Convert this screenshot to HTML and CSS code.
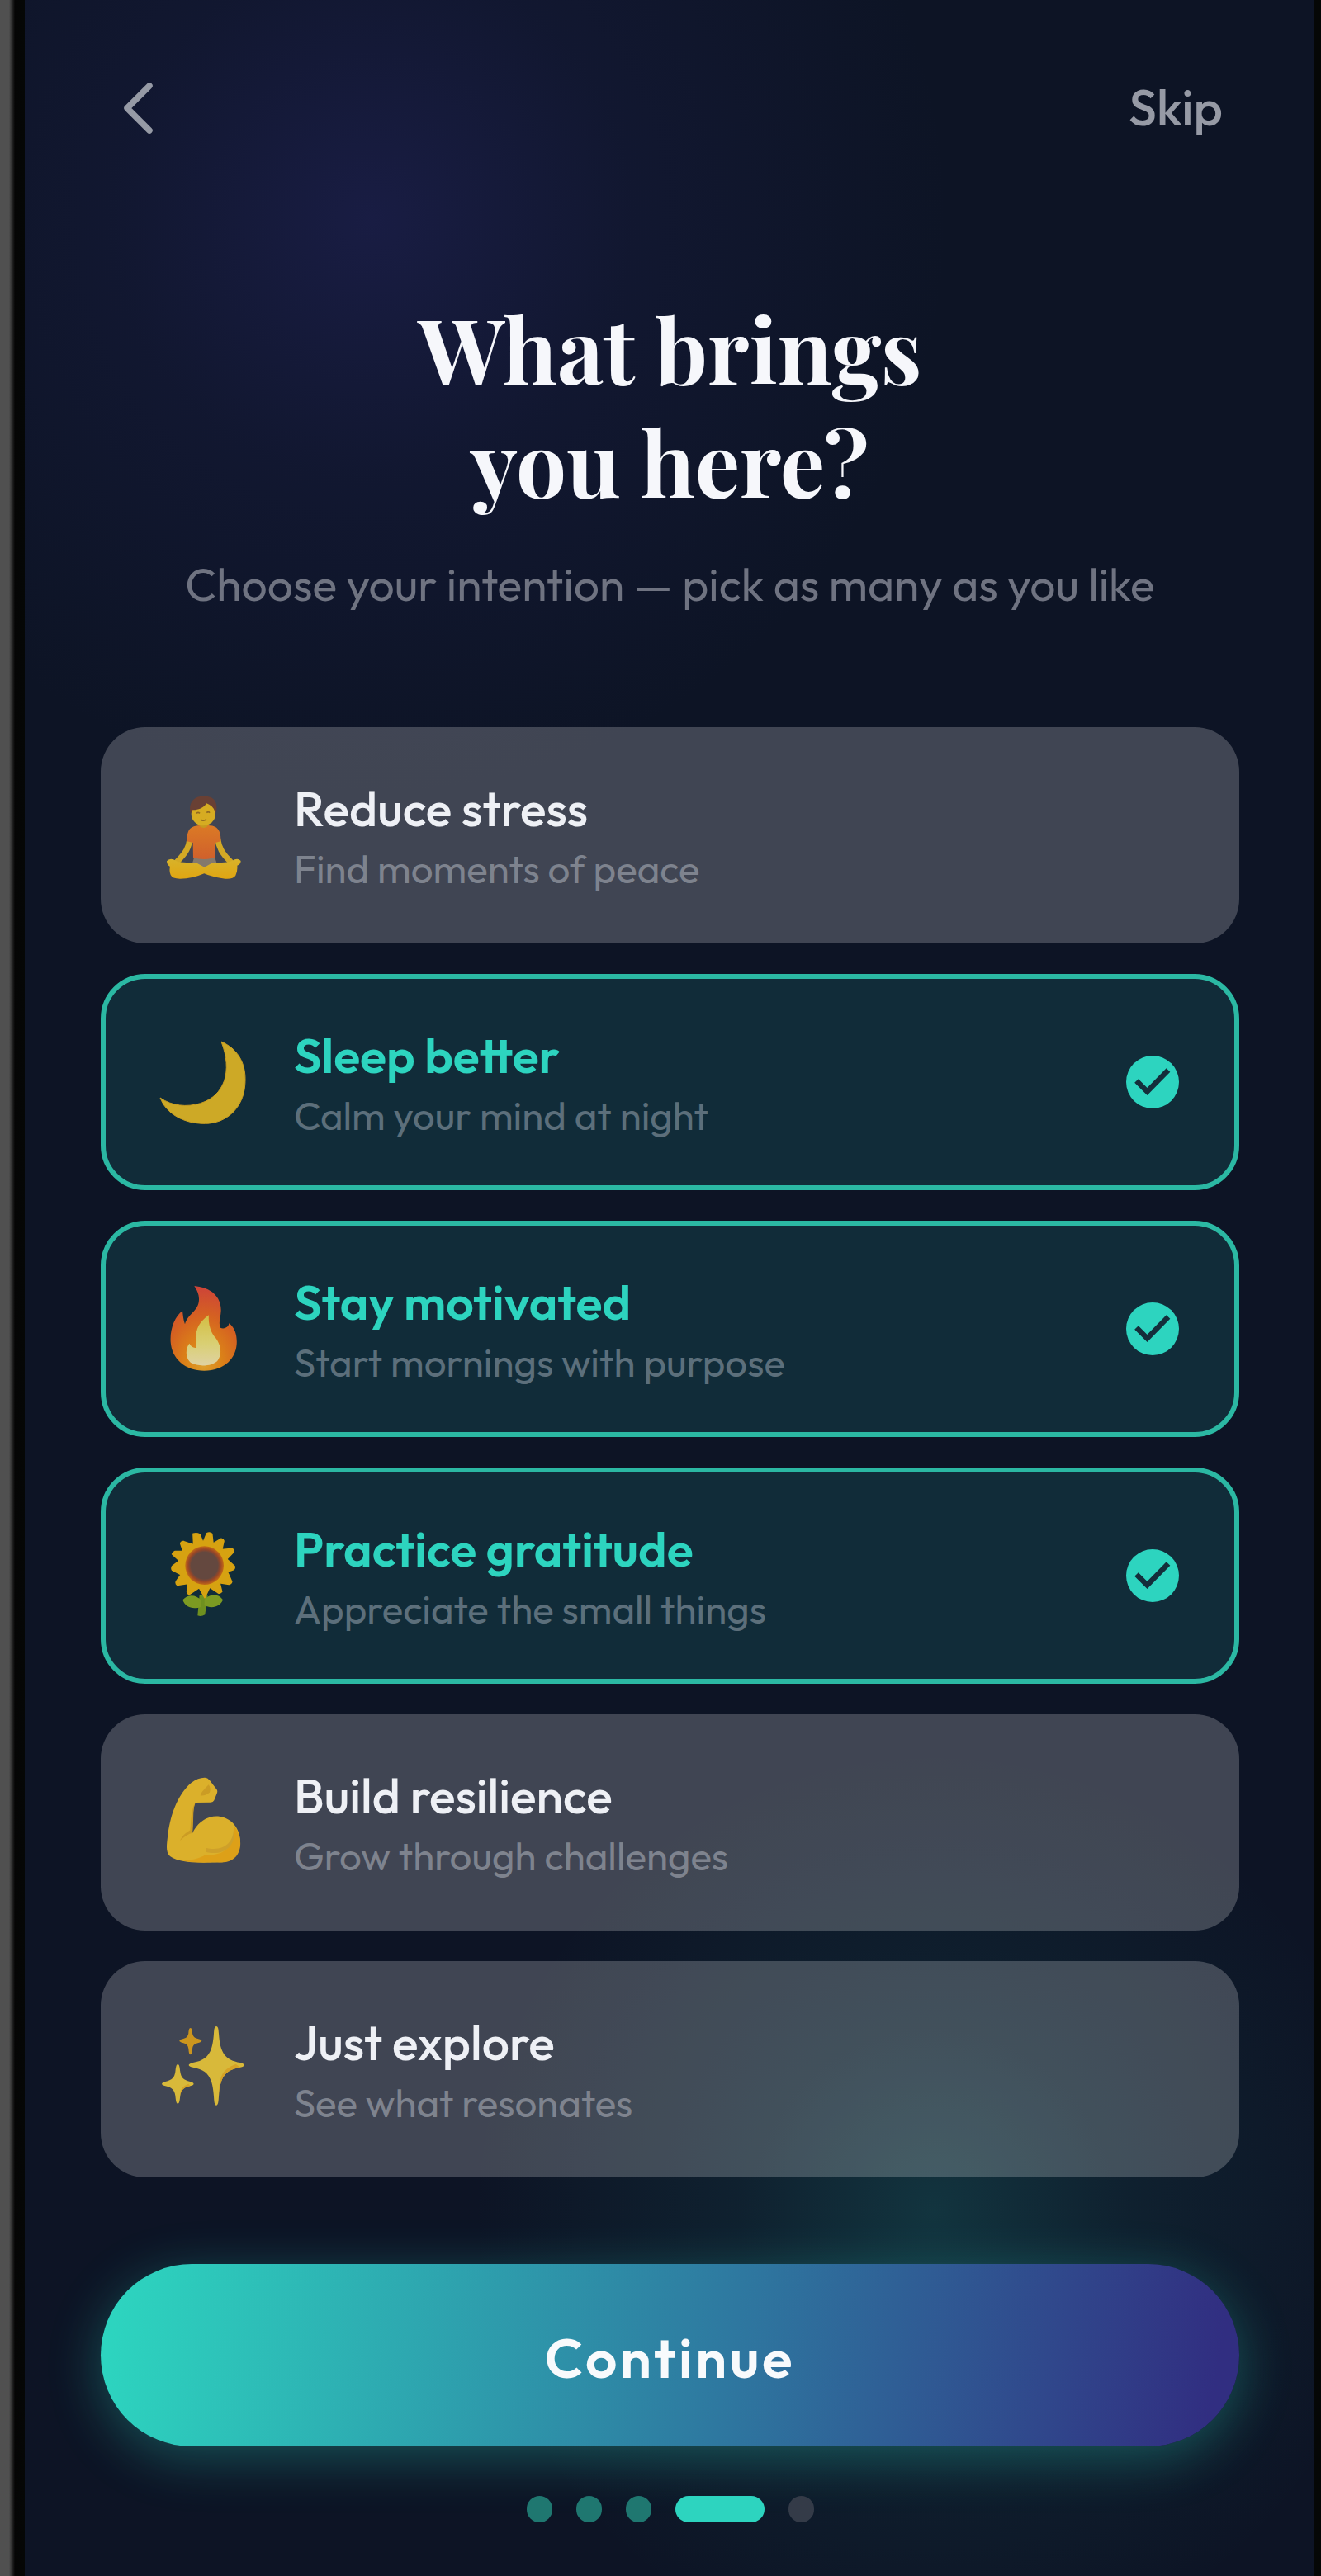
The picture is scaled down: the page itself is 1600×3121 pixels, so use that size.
FILE: index.html
```html
<!DOCTYPE html>
<html lang="en">
<head>
<meta charset="utf-8">
<title>What brings you here?</title>
<link rel="stylesheet" href="styles.css">
</head>
<body>
<div class="device">
<main class="screen">
  <header class="topbar">
    <svg class="back" viewBox="0 0 44 70" aria-label="Back"><path d="M35 8 8 35 35 62"/></svg>
    <span class="skip">Skip</span>
  </header>

  <h1 class="title">What brings<br>you here?</h1>
  <p class="lead">Choose your intention — pick as many as you like</p>

  <section class="options">
    <article class="option">
      <svg class="emoji" viewBox="0 0 420 420">
        <defs>
          <linearGradient id="shirt" x1="0" y1="0" x2="0" y2="1"><stop offset="0" stop-color="#db7a25"/><stop offset="1" stop-color="#d0602c"/></linearGradient>
          <linearGradient id="legs" x1="0" y1="0" x2="0" y2="1"><stop offset="0" stop-color="#d8b32a"/><stop offset="1" stop-color="#e0a512"/></linearGradient>
        </defs>
        <path d="M165 292h76l8 24-46 14-46-12z" fill="#84796c"/>
        <path d="M151 215c-4 40-16 60-47 90M250 215c4 40 18 62 47 90" fill="none" stroke="#d3a925" stroke-width="21" stroke-linecap="round"/>
        <path d="M140 232c-2-42 12-56 44-58h34c32 2 46 18 44 58l-20 5-1 54q-39 12-79 0l-1-54z" fill="url(#shirt)"/>
        <path d="M66 304q10-12 24-6l17 9 70 5 26 14 25-14 67-5 18-9q12-6 22 5 0 12-13 17 2 20-6 36-8 14-38 12-39-4-76-19-43 19-88 19-28 0-34-14-6-14-2-30-12-6-12-20z" fill="url(#legs)"/>
        <path d="M186 158h28v20q-14 10-28 0z" fill="#c7991f"/>
        <ellipse cx="199" cy="132" rx="44" ry="43" fill="#d6ac22"/>
        <path d="M152 132c-8-40 10-66 50-64 40-2 53 30 41 64-3-18-12-30-33-38-10 18-34 25-50 24z" fill="#694034"/>
        <path d="M174 130q6-6 12 0M211 128q6-6 11 0M189 153q10 7 21-1" fill="none" stroke="#906a22" stroke-width="5"/>
      </svg>
      <div class="copy"><h2>Reduce stress</h2><p>Find moments of peace</p></div>
    </article>

    <article class="option selected">
      <svg class="emoji" viewBox="0 0 420 420">
        <path d="M264 63C330 92 357 150 350 222 343 304 284 360 205 361 127 361 64 325 42 267 84 297 139 302 188 287 276 260 306 171 264 63z" fill="#cda926" stroke="#c99d22" stroke-width="3"/>
      </svg>
      <div class="copy"><h2>Sleep better</h2><p>Calm your mind at night</p></div>
      <svg class="check" viewBox="0 0 64 64"><circle cx="32" cy="32" r="32"/><path d="M12.500 30.500 25.500 43.500 51 17.500"/></svg>
    </article>

    <article class="option selected">
      <svg class="emoji" viewBox="0 0 420 420">
        <defs>
          <radialGradient id="flame" cx=".5" cy=".92" r=".92"><stop offset="0" stop-color="#dda02c"/><stop offset=".3" stop-color="#db8218"/><stop offset=".62" stop-color="#d56221"/><stop offset="1" stop-color="#cd4339"/></radialGradient>
          <linearGradient id="core" x1="0" y1="0" x2="0" y2="1"><stop offset="0" stop-color="#d3bd43"/><stop offset=".55" stop-color="#d9cf72"/><stop offset="1" stop-color="#dfd2a2"/></linearGradient>
        </defs>
        <path d="M166 54C230 60 264 96 263 144 262 170 252 188 262 207 276 212 291 203 292 190 316 207 322 238 320 266 315 326 266 362 202 362 134 362 84 319 80 257 77 210 96 164 123 144 125 160 126 177 132 193 142 154 182 146 183 104 184 84 175 68 166 54z" fill="url(#flame)"/>
        <path d="M219 160C175 190 166 225 174 278 163 281 153 273 148 263 132 283 134 320 155 334 181 348 227 346 249 328 270 301 262 263 240 239 224 218 216 190 219 160z" fill="url(#core)"/>
      </svg>
      <div class="copy"><h2>Stay motivated</h2><p>Start mornings with purpose</p></div>
      <svg class="check" viewBox="0 0 64 64"><circle cx="32" cy="32" r="32"/><path d="M12.500 30.500 25.500 43.500 51 17.500"/></svg>
    </article>

    <article class="option selected">
      <svg class="emoji" viewBox="0 0 420 420">
        <defs><radialGradient id="seeds"><stop offset=".7" stop-color="#64483f"/><stop offset=".84" stop-color="#9a4626"/><stop offset="1" stop-color="#c36a16"/></radialGradient></defs>
        <path d="M178 355 185 280h30l-10 72q-14 8-27 3z" fill="#6f901f"/>
        <path d="M124 298c18-22 48-20 68 2v23c-30 12-60 2-68-25zM270 298c-16-24-46-24-67-2v23c28 12 58 4 67-21z" fill="#7c9a22"/>
        <path d="M162 58Q174 54 186 60L198 90 212 56Q222 52 230 58L234 94 264 76Q272 78 273 84L266 116 304 112Q311 118 307 126L284 150 312 176Q314 184 308 188L286 196 302 232Q300 240 292 241L258 236 266 268Q260 276 252 272L222 252 204 290 184 254 148 278Q140 276 140 268L144 238 104 244Q98 240 100 232L118 206 86 190Q82 184 86 176L112 156 86 132Q88 124 96 122L126 122 116 92Q120 84 128 86L164 98z" fill="#d6a211" stroke="#d6a211" stroke-width="5" stroke-linejoin="round"/>
        <circle cx="203" cy="173" r="70" fill="url(#seeds)"/>
      </svg>
      <div class="copy"><h2>Practice gratitude</h2><p>Appreciate the small things</p></div>
      <svg class="check" viewBox="0 0 64 64"><circle cx="32" cy="32" r="32"/><path d="M12.500 30.500 25.500 43.500 51 17.500"/></svg>
    </article>

    <article class="option">
      <svg class="emoji" viewBox="0 0 420 420">
        <path d="M203 47Q213 46 222 57L248 91Q252 98 247 107L238 130Q234 138 224 137L170 138C158 170 160 205 159 249 181 203 219 184 257 188 303 194 331 233 333 275 334 324 306 355 260 355 200 356 117 361 78 333 61 318 66 291 69 263 78 185 104 111 154 67 172 52 188 48 203 47z" fill="#dbb02b"/>
        <path d="M309 222c31 33 33 92 3 117-18 17-44 17-71 16-47 1-87 2-118-6 35-1 63-8 84-22 67 8 112-35 102-105z" fill="#dda018"/>
        <path d="M207 302c62 16 103-16 102-72 13 64-35 105-102 87z" fill="#cea02a"/>
        <path d="M218 73c-11 13-25 23-30 39 15 1 24-3 34-11 4-10 2-20-4-28z" fill="#cb9c24"/>
        <path d="M169 139c-10 22-4 77-10 110-13 1-27 12-45 27 12-24 27-30 37-38 4-36 3-74 18-99z" fill="#cb9c24"/>
      </svg>
      <div class="copy"><h2>Build resilience</h2><p>Grow through challenges</p></div>
    </article>

    <article class="option">
      <svg class="emoji" viewBox="0 0 420 420">
        <g fill="#d8b93a">
          <path d="M246 54c7 0 8 12 9 26 5 72 23 96 78 106 20 5 20 13 0 17-55 10-73 34-78 106-1 17-2 32-9 32s-8-15-9-32c-5-72-23-96-76-106-20-4-20-12 0-17 53-10 71-34 76-106 1-14 2-26 9-26z"/>
          <path d="M106 192c6 0 7 12 9 28 3 20 12 30 36 35 17 4 17 12 0 16-24 5-33 15-36 35-2 17-3 29-9 29s-7-12-9-29c-3-20-12-30-36-35-17-4-17-12 0-16 24-5 33-15 36-35 2-16 3-28 9-28z"/>
        </g>
        <path d="M152 60c5 0 6 9 7 19 2 13 8 18 22 21 16 4 16 10 0 14-14 3-20 8-22 22-1 11-2 21-7 21s-6-10-7-21c-2-14-8-19-21-22-16-4-16-10 0-14 13-3 19-8 21-21 1-10 2-19 7-19z" fill="#cb951e"/>
        <path d="M333 203c-55 10-73 34-78 106 2-69 7-96 62-118zM151 271c-24 5-33 15-36 35 0-25 8-34 30-43z" fill="#d6a226"/>
      </svg>
      <div class="copy"><h2>Just explore</h2><p>See what resonates</p></div>
    </article>
  </section>

  <button class="continue" type="button">Continue</button>
  <nav class="steps"><i class="done"></i><i class="done"></i><i class="done"></i><i class="current"></i><i></i></nav>
</main>
</div>
</body>
</html>
```

FILE: styles.css
```css
* { box-sizing: border-box; margin: 0; padding: 0; }
body { width: 1600px; height: 3121px; overflow: hidden; background: #050706; }
.device {
  height: 3121px;
  padding: 0 9px 0 30px;
  background: linear-gradient(90deg, #505050 0 11px, #252525 15px, #050505 18px, #050706 30px);
}
.screen {
  display: flex;
  flex-direction: column;
  height: 3121px;
  padding: 0 90px 0 92px;
  font-family: "Outfit", "Lato", sans-serif;
  background:
    radial-gradient(circle 700px at 420px 265px, rgba(49, 46, 129, .33), rgba(49, 46, 129, .12) 45%, rgba(49, 46, 129, 0)),
    radial-gradient(circle 560px at 1100px 2680px, rgba(45, 212, 191, .17), rgba(45, 212, 191, .065) 42%, rgba(45, 212, 191, 0)),
    #0d1425;
}
.topbar { display: flex; justify-content: space-between; height: 262px; padding: 96px 20px 0 24px; }
.back { width: 44px; height: 70px; fill: none; stroke: #969aa5; stroke-width: 7.500; stroke-linecap: round; stroke-linejoin: round; }
.skip { margin-top: -2px; font-size: 61.200px; line-height: 72px; font-weight: 500; color: #969aa5; }
.title { padding-top: 91px; font: 700 108.300px/137px "Playfair Display", "Liberation Serif", serif; color: #f6f7fb; text-align: center; }
.lead { margin-top: 45px; height: 209px; font-size: 55.200px; line-height: 72px; color: #6f7381; text-align: center; white-space: nowrap; }
.options { display: grid; grid-template-rows: repeat(6, 262px); gap: 37px; }
.option { display: flex; align-items: center; padding: 0 74px 0 58px; border-radius: 54px; background: rgba(255, 255, 255, .21); }
.selected { padding: 0 67px 0 52px; border: 6px solid #2bb8a3; background: rgba(45, 212, 191, .13); }
.emoji { width: 140px; height: 140px; flex: none; }
.copy { flex: 1; margin-left: 36px; padding-top: 7px; white-space: nowrap; }
.copy h2 { font-size: 59px; line-height: 72px; font-weight: 500; color: #eef0f5; }
.copy p { font-size: 47.500px; line-height: 74px; color: #7e838e; }
.selected h2 { color: #2dd4bf; font-weight: 600; }
.selected p { color: #5c6f7b; }
.check { width: 64px; height: 64px; flex: none; }
.check circle { fill: #2dd4bf; }
.check path { fill: none; stroke: #142e3b; stroke-width: 6.500; }
.continue {
  height: 221px;
  margin-top: 105px;
  padding-top: 5px;
  flex: none;
  border: 0;
  border-radius: 111px;
  font: 600 67.500px/80px "Outfit", "Lato", sans-serif;
  letter-spacing: 3.600px;
  color: #f8fafc;
  background: linear-gradient(100deg, #2dd4bf 2%, #2e78a0 55%, #312e81 97%);
  box-shadow: 0 14px 64px rgba(45, 212, 191, .32);
}
.steps { display: flex; justify-content: center; gap: 29px; margin-top: 60px; }
.steps i { width: 31px; height: 32px; border-radius: 16px; background: #343b48; }
.steps .done { background: #1f7770; }
.steps .current { width: 108px; background: #2dd4bf; }
```
